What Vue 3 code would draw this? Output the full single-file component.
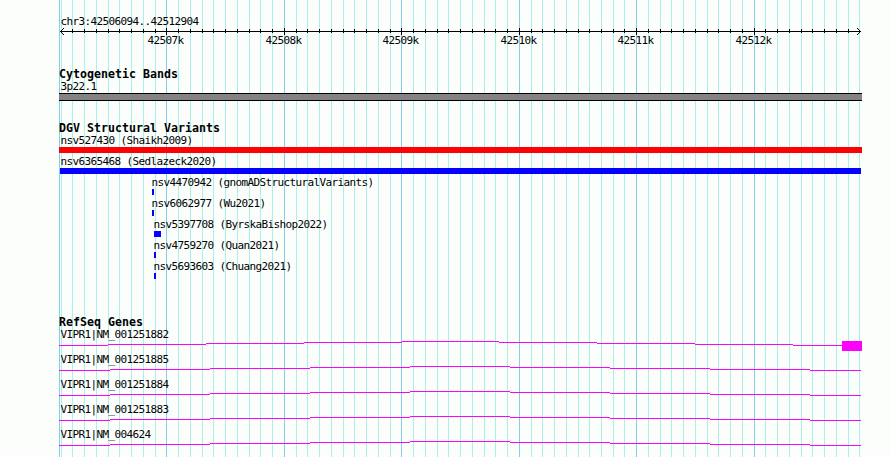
<template>
  <main class="browser">
    <svg class="grid" width="890" height="457">
      <rect class="major" x="59" y="0" width="1" height="457" />
      <rect
        v-for="line in lines"
        :key="line.x"
        :class="line.major ? 'major' : 'minor'"
        :x="line.x"
        y="0"
        width="1"
        height="457"
      />
    </svg>

    <header class="region">
      <div class="label">chr3:42506094..42512904</div>
      <svg class="ruler" width="890" height="20">
        <rect x="60" y="3" width="801" height="1" />
        <path d="M63 0h1v1h-1zM62 1h1v1h-1zM61 2h1v1h-1zM61 4h1v1h-1zM62 5h1v1h-1zM63 6h1v1h-1z" />
        <path d="M857 0h1v1h-1zM858 1h1v1h-1zM859 2h1v1h-1zM859 4h1v1h-1zM858 5h1v1h-1zM857 6h1v1h-1z" />
        <rect
          v-for="line in ticks"
          :key="line.x"
          :x="line.x"
          :y="line.major ? 0 : 1"
          width="1"
          :height="line.major ? 7 : 4"
        />
        <text v-for="line in majors" :key="line.x" :x="line.x - 18.6" y="16">{{ line.name }}</text>
      </svg>
    </header>

    <section class="track bands">
      <h2>Cytogenetic Bands</h2>
      <div class="label">3p22.1</div>
      <div class="band"></div>
    </section>

    <section class="track variants">
      <h2>DGV Structural Variants</h2>
      <div
        v-for="item in variants"
        :key="item.name"
        class="variant"
        :style="{ paddingLeft: item.x + 'px' }"
      >
        <div class="label">{{ item.name }}</div>
        <div
          class="bar"
          :class="item.color"
          :style="{ marginLeft: item.offset + 'px', width: item.width + 'px' }"
        ></div>
      </div>
    </section>

    <section class="track genes">
      <h2>RefSeq Genes</h2>
      <div v-for="gene in genes" :key="gene.name" class="gene">
        <div class="label">{{ gene.name }}</div>
        <svg width="890" height="10">
          <rect
            v-for="part in intron(gene.steps, gene.end)"
            :key="part.x"
            :x="part.x"
            :y="part.y"
            :width="part.width"
            height="1"
          />
          <rect v-if="gene.exon" x="842" y="0" width="20" height="10" />
        </svg>
      </div>
    </section>
  </main>
</template>

<script setup>
import { computed } from "vue";

// one line per 100 bp, the first one is 42506100
const lines = Array.from({ length: 69 }, (_, i) => ({
  x: Math.floor(61.22 + i * 11.745),
  major: i % 10 === 9,
  name: 42506 + (i + 1) / 10 + "k",
}));

const majors = computed(() => lines.filter((line) => line.major));
const ticks = computed(() => lines.slice(1, -1));

const variants = [
  { name: "nsv527430 (Shaikh2009)", x: 60, offset: -1, width: 803, color: "red" },
  { name: "nsv6365468 (Sedlazeck2020)", x: 60, offset: 0, width: 801, color: "blue" },
  { name: "nsv4470942 (gnomADStructuralVariants)", x: 151, offset: 1, width: 2, color: "blue" },
  { name: "nsv6062977 (Wu2021)", x: 151, offset: 1, width: 2, color: "blue" },
  { name: "nsv5397708 (ByrskaBishop2022)", x: 153, offset: 1, width: 7, color: "blue" },
  { name: "nsv4759270 (Quan2021)", x: 153, offset: 1, width: 2, color: "blue" },
  { name: "nsv5693603 (Chuang2021)", x: 153, offset: 1, width: 2, color: "blue" },
];

const shortSteps = [59, 108, 206, 304, 402, 499, 597, 695, 793];
const longSteps = [59, 110, 210, 310, 410, 510, 610, 710, 810];

const genes = [
  { name: "VIPR1|NM_001251882", steps: shortSteps, end: 842, exon: true },
  { name: "VIPR1|NM_001251885", steps: longSteps, end: 861 },
  { name: "VIPR1|NM_001251884", steps: longSteps, end: 861 },
  { name: "VIPR1|NM_001251883", steps: longSteps, end: 861 },
  { name: "VIPR1|NM_004624", steps: longSteps, end: 861 },
];

// the intron climbs 1px per step up to the middle, then goes down again
const intron = (steps, end) =>
  steps.map((x, i) => ({
    x,
    y: Math.abs(4 - i),
    width: (steps[i + 1] || end) - x,
  }));
</script>

<style>
body {
  margin: 0;
  background: #fcfefc;
}
</style>

<style scoped>
.browser {
  position: relative;
  width: 890px;
  height: 457px;
  overflow: hidden;
  background: #fcfefc;
  color: #000;
  font-family: "DejaVu Sans Mono", monospace;
  font-size: 11px;
}

svg {
  display: block;
  shape-rendering: crispEdges;
}

.grid {
  position: absolute;
  top: 0;
  left: 0;
}

.minor {
  fill: #acf0ec;
}

.major {
  fill: #84ceec;
}

.region,
.track {
  position: relative;
}

.region {
  padding-top: 15px;
}

.label,
.ruler text {
  font-size: 11px;
  letter-spacing: -0.622px;
  white-space: pre;
}

.label {
  height: 13px;
  line-height: 13px;
  text-indent: 0.4px;
}

.region > .label,
.bands > .label,
.gene > .label {
  padding-left: 60px;
}

h2 {
  height: 13px;
  margin: 0;
  padding-left: 59px;
  font-size: 11.6px;
  line-height: 14px;
  letter-spacing: 0.016px;
  white-space: pre;
}

.bands {
  margin-top: 19px;
}

.band {
  box-sizing: border-box;
  width: 803px;
  height: 8px;
  margin-left: 59px;
  border: solid #000;
  border-width: 1px 0;
  background: #848284;
}

.variants {
  margin-top: 20px;
}

.variant {
  height: 21px;
}

.bar {
  height: 6px;
}

.red {
  background: #fc0204;
}

.blue {
  background: #0402fc;
}

.genes {
  margin-top: 34px;
}

.gene {
  height: 25px;
}

.gene svg {
  fill: #fc02fc;
}
</style>
